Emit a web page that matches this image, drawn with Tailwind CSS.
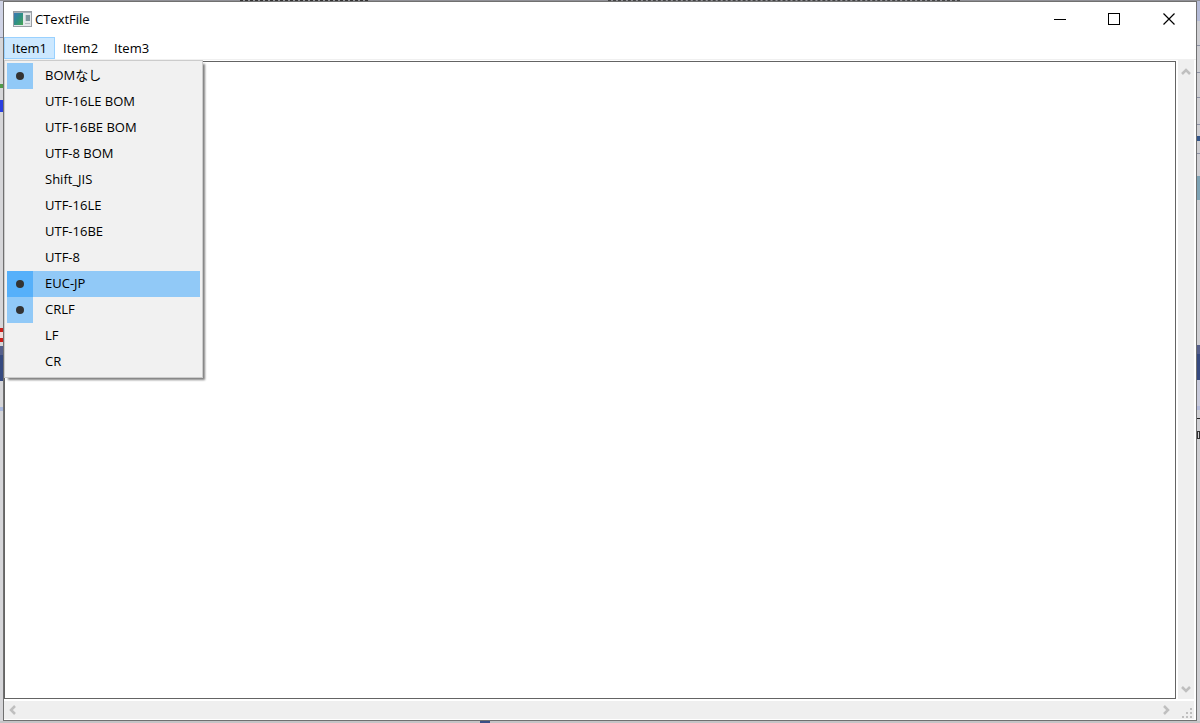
<!DOCTYPE html>
<html lang="ja">
<head>
  <meta charset="UTF-8">
  <meta name="viewport" content="width=device-width, initial-scale=1">
  <title>CTextFile</title>
  <script src="https://cdn.jsdelivr.net/npm/@tailwindcss/browser@4"></script>
</head>
<body class="h-screen flex flex-col overflow-hidden bg-[#c8c9d0] text-[13px] leading-5 text-black font-['Open_Sans','Noto_Sans_CJK_JP',sans-serif]">
  <!-- top edge of the window behind -->
  <div class="h-px shrink-0 flex bg-[#909096]">
    <div class="w-1/5"></div>
    <div class="w-32 border-t border-dashed border-[#333]"></div>
    <div class="w-1/5"></div>
    <div class="flex-1 border-t border-dashed border-[#444]"></div>
    <div class="w-1/5"></div>
  </div>

  <div class="flex-1 min-h-0 flex">
    <!-- left edge of the window behind -->
    <div class="w-[3px] shrink-0 flex flex-col overflow-hidden bg-[#d6d6d9]">
      <div class="h-9 shrink-0 bg-[#d0d4e6]"></div>
      <div class="h-px shrink-0 bg-[#8a93b0]"></div>
      <div class="h-[46px] shrink-0"></div>
      <div class="h-1 shrink-0 bg-[#4f9a4a]"></div>
      <div class="h-3 shrink-0"></div>
      <div class="h-3 shrink-0 bg-[#2a3fe0]"></div>
      <div class="h-[216px] shrink-0"></div>
      <div class="h-[14px] shrink-0 border-y-4 border-[#cc1f1a] bg-[#f3d8d8]"></div>
      <div class="h-1 shrink-0"></div>
      <div class="h-[9px] shrink-0 bg-[#56608c]"></div>
      <div class="h-[26px] shrink-0 bg-[#364a80]"></div>
      <div class="h-[26px] shrink-0"></div>
      <div class="h-1 shrink-0 bg-[#a9b8dc]"></div>
    </div>

    <div class="relative flex-1 min-w-0 flex flex-col border border-[#707070] bg-white">
      <!-- title bar -->
      <header class="h-[35px] shrink-0 flex items-center pl-[9px] pb-0.5">
        <svg class="w-[19px] h-4" viewBox="0 0 19 16">
          <defs>
            <linearGradient id="screen" x1="0" y1="0" x2="1" y2="1">
              <stop offset="0" stop-color="#3c78b8"/>
              <stop offset="0.5" stop-color="#2f8f86"/>
              <stop offset="1" stop-color="#49a552"/>
            </linearGradient>
          </defs>
          <rect x="0.5" y="0.5" width="18" height="15" fill="#e4e7ea" stroke="#9a9fa5"/>
          <rect x="1" y="1" width="17" height="1" fill="#a9b1b8"/>
          <rect x="1" y="2" width="9" height="12" fill="url(#screen)"/>
          <rect x="12" y="4" width="5" height="6" fill="#7f959d"/>
          <path d="M12.500 4v6" stroke="#c5d0d4"/>
          <path d="M12 12.500h5" stroke="#b5bcc2"/>
        </svg>
        <h1 class="flex-1 pl-[3px]">CTextFile</h1>
        <button type="button" aria-label="Minimize" class="w-[54px] h-full flex items-center justify-center">
          <svg class="w-3 h-3" viewBox="0 0 12 12"><path d="M0 6.5h12" stroke="#000"/></svg>
        </button>
        <button type="button" aria-label="Maximize" class="w-[54px] h-full flex items-center justify-center">
          <svg class="w-3 h-3" viewBox="0 0 12 12"><rect x="0.5" y="0.5" width="11" height="11" fill="none" stroke="#000"/></svg>
        </button>
        <button type="button" aria-label="Close" class="w-[55px] h-full flex items-center justify-center">
          <svg class="w-3 h-3" viewBox="0 0 12 12"><path d="M0.5 0.5l11 11M11.5 0.5l-11 11" stroke="#000" stroke-width="1.2"/></svg>
        </button>
      </header>

      <!-- menu bar -->
      <nav class="h-[22px] shrink-0 flex">
        <button type="button" aria-expanded="true" class="px-[7px] pb-px border border-[#99d1ff] bg-[#cce8ff]">Item1</button>
        <button type="button" class="px-2 pb-px">Item2</button>
        <button type="button" class="px-2 pb-px">Item3</button>
      </nav>

      <div class="flex-1 min-h-0 flex flex-col border-t border-[#f0f0f0]">
        <div class="flex-1 min-h-0 flex">
          <textarea aria-label="Text" class="flex-1 min-w-0 resize-none mt-px border border-[#646464] bg-white outline-none"></textarea>
          <!-- vertical scroll bar -->
          <div class="w-4 shrink-0 mx-0.5 flex flex-col justify-between items-center bg-[#efefef]">
            <button type="button" aria-label="Scroll up" class="h-6 flex items-center">
              <svg class="w-[10px] h-[8px]" viewBox="0 0 10 8"><path d="M1 6l4-4 4 4" fill="none" stroke="#bfbfbf" stroke-width="2.500"/></svg>
            </button>
            <button type="button" aria-label="Scroll down" class="h-5 flex items-center">
              <svg class="w-[10px] h-[8px]" viewBox="0 0 10 8"><path d="M1 2l4 4 4-4" fill="none" stroke="#bfbfbf" stroke-width="2.500"/></svg>
            </button>
          </div>
        </div>
        <!-- horizontal scroll bar -->
        <div class="h-[18px] shrink-0 mt-0.5 mb-px mr-0.5 flex items-center bg-[#efefef]">
          <button type="button" aria-label="Scroll left" class="pl-[5px]">
            <svg class="w-[8px] h-[10px]" viewBox="0 0 8 10"><path d="M6 1L2 5l4 4" fill="none" stroke="#bfbfbf" stroke-width="2.500"/></svg>
          </button>
          <div class="flex-1"></div>
          <button type="button" aria-label="Scroll right" class="pr-3">
            <svg class="w-[8px] h-[10px]" viewBox="0 0 8 10"><path d="M2 1l4 4-4 4" fill="none" stroke="#bfbfbf" stroke-width="2.500"/></svg>
          </button>
          <svg class="w-[11px] h-[11px] self-end mr-px" viewBox="0 0 11 11" fill="#bfbfbf">
            <path d="M8 0h2v2h-2zM4 4h2v2h-2zM8 4h2v2h-2zM0 8h2v2h-2zM4 8h2v2h-2zM8 8h2v2h-2z"/>
          </svg>
        </div>
      </div>

      <!-- drop-down of Item1 -->
      <ul role="menu" class="absolute left-0 top-[58px] w-[199px] p-[2px] border border-[#ccc] bg-[#f1f1f1] shadow-[3px_3px_2px_-1px_#808080]">
        <li><button type="button" role="menuitemradio" aria-checked="true" class="w-full h-[26px] flex items-center text-left"><span class="w-[26px] h-full mr-3 flex items-center justify-center bg-[#91c9f7]"><span class="size-2 rounded-full bg-[#333]"></span></span><span class="pb-0.5">BOMなし</span></button></li>
        <li><button type="button" role="menuitemradio" class="w-full h-[26px] pl-[38px] pb-0.5 text-left">UTF-16LE BOM</button></li>
        <li><button type="button" role="menuitemradio" class="w-full h-[26px] pl-[38px] pb-0.5 text-left">UTF-16BE BOM</button></li>
        <li><button type="button" role="menuitemradio" class="w-full h-[26px] pl-[38px] pb-0.5 text-left">UTF-8 BOM</button></li>
        <li><button type="button" role="menuitemradio" class="w-full h-[26px] pl-[38px] pb-0.5 text-left">Shift_JIS</button></li>
        <li><button type="button" role="menuitemradio" class="w-full h-[26px] pl-[38px] pb-0.5 text-left">UTF-16LE</button></li>
        <li><button type="button" role="menuitemradio" class="w-full h-[26px] pl-[38px] pb-0.5 text-left">UTF-16BE</button></li>
        <li><button type="button" role="menuitemradio" class="w-full h-[26px] pl-[38px] pb-0.5 text-left">UTF-8</button></li>
        <li><button type="button" role="menuitemradio" aria-checked="true" class="w-full h-[26px] flex items-center text-left bg-[#91c9f7]"><span class="w-[26px] h-full mr-3 flex items-center justify-center bg-[#56b0fa]"><span class="size-2 rounded-full bg-[#333]"></span></span><span class="pb-0.5">EUC-JP</span></button></li>
        <li><button type="button" role="menuitemradio" aria-checked="true" class="w-full h-[26px] flex items-center text-left"><span class="w-[26px] h-full mr-3 flex items-center justify-center bg-[#91c9f7]"><span class="size-2 rounded-full bg-[#333]"></span></span><span class="pb-0.5">CRLF</span></button></li>
        <li><button type="button" role="menuitemradio" class="w-full h-[26px] pl-[38px] pb-0.5 text-left">LF</button></li>
        <li><button type="button" role="menuitemradio" class="w-full h-[26px] pl-[38px] pb-0.5 text-left">CR</button></li>
      </ul>
    </div>

    <!-- right edge of the window behind -->
    <div class="w-[3px] shrink-0 flex flex-col overflow-hidden bg-[#cfcfd3]">
      <div class="h-5 shrink-0 bg-[#b4bbd8]"></div>
      <div class="h-6 shrink-0"></div>
      <div class="h-px shrink-0 bg-[#8e93a6]"></div>
      <div class="h-[26px] shrink-0"></div>
      <div class="h-px shrink-0 bg-[#8e93a6]"></div>
      <div class="h-6 shrink-0"></div>
      <div class="h-px shrink-0 bg-[#8e93a6]"></div>
      <div class="h-[26px] shrink-0"></div>
      <div class="h-px shrink-0 bg-[#8e93a6]"></div>
      <div class="h-[11px] shrink-0"></div>
      <div class="h-[5px] shrink-0 bg-[#34568a]"></div>
      <div class="h-3 shrink-0"></div>
      <div class="h-px shrink-0 bg-[#8e93a6]"></div>
      <div class="h-[22px] shrink-0"></div>
      <div class="h-6 shrink-0 bg-[#7ea3b5]"></div>
      <div class="h-[145px] shrink-0"></div>
      <div class="h-[9px] shrink-0 bg-[#56608c]"></div>
      <div class="h-[26px] shrink-0 bg-[#364a80]"></div>
      <div class="h-[26px] shrink-0 bg-[#c9cbdc]"></div>
      <div class="h-1 shrink-0 bg-[#b4bbdc]"></div>
      <div class="h-2 shrink-0"></div>
      <div class="h-px shrink-0 bg-[#222]"></div>
      <div class="h-3 shrink-0"></div>
      <div class="h-2 shrink-0 border border-[#333]"></div>
    </div>
  </div>

  <!-- bottom edge of the window behind -->
  <div class="h-0.5 shrink-0 flex bg-[#c4c4c6]">
    <div class="w-2/5"></div>
    <div class="w-[10px] bg-[#3b4f86]"></div>
  </div>
</body>
</html>
